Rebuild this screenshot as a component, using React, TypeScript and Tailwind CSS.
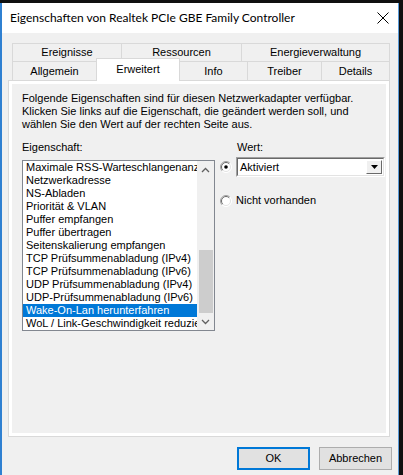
import React from "react";

const items = [
  "Maximale RSS-Warteschlangenanzahl",
  "Netzwerkadresse",
  "NS-Abladen",
  "Priorität & VLAN",
  "Puffer empfangen",
  "Puffer übertragen",
  "Seitenskalierung empfangen",
  "TCP Prüfsummenabladung (IPv4)",
  "TCP Prüfsummenabladung (IPv6)",
  "UDP Prüfsummenabladung (IPv4)",
  "UDP-Prüfsummenabladung (IPv6)",
  "Wake-On-Lan herunterfahren",
  "WoL / Link-Geschwindigkeit reduzieren",
];

function Radio({ checked }: { checked?: boolean }) {
  return (
    <svg width="12" height="12" viewBox="0 0 12 12">
      <circle cx="6" cy="6" r="5.5" fill="#ffffff" />
      <path d="M2.1 9.9 A5.5 5.5 0 0 1 9.9 2.1" stroke="#a0a0a0" fill="none" />
      <path d="M2.8 9.2 A4.5 4.5 0 0 1 9.2 2.8" stroke="#696969" fill="none" />
      <path d="M9.9 2.1 A5.5 5.5 0 0 1 2.1 9.9" stroke="#ffffff" fill="none" />
      <path d="M9.2 2.8 A4.5 4.5 0 0 1 2.8 9.2" stroke="#e3e3e3" fill="none" />
      {checked && <circle cx="6" cy="6" r="1.8" fill="#000000" />}
    </svg>
  );
}

function Chevron({ up }: { up?: boolean }) {
  return (
    <svg width="9" height="6" viewBox="0 0 9 6">
      <path
        d={up ? "M1 5 L4.5 1.5 L8 5" : "M1 1 L4.5 4.5 L8 1"}
        stroke="#606060"
        strokeWidth="1.3"
        fill="none"
      />
    </svg>
  );
}

export default function App() {
  return (
    <div
      className="w-[403px] h-[475px] overflow-hidden bg-[#101010] pt-[3px] pr-[4px] text-[11px] text-black"
      style={{ fontFamily: '"Liberation Sans", Arial, sans-serif' }}
    >
      <div className="h-full flex flex-col border-l-2 border-l-[#2f80d1] border-r border-r-[#5b9bd8] bg-[#f0f0f0]">
        {/* Title bar */}
        <div className="h-[30px] shrink-0 bg-white flex items-center justify-between pl-[8px] pr-[8px]">
          <span className="text-[12px] text-black font-[Lato,sans-serif]">
            Eigenschaften von Realtek PCIe GBE Family Controller
          </span>
          <svg width="12" height="12" viewBox="0 0 12 12" className="mr-[1px]">
            <path d="M0.5 0.5 L11.5 11.5 M11.5 0.5 L0.5 11.5" stroke="#000" strokeWidth="1" />
          </svg>
        </div>

        {/* Tabs */}
        <div className="mt-[10px] ml-[8px] w-[378px] flex flex-col">
          <div className="ml-[2px] w-[378px] flex h-[18px] border-t border-l border-[#d9d9d9]">
            <div className="w-[109px] flex items-center justify-center border-r border-[#d9d9d9]">Ereignisse</div>
            <div className="w-[120px] flex items-center justify-center border-r border-[#d9d9d9]">Ressourcen</div>
            <div className="flex-1 flex items-center justify-center border-r border-[#d9d9d9]">Energieverwaltung</div>
          </div>
          <div className="ml-[2px] w-[378px] flex items-end h-[19px] border-t border-l border-[#d9d9d9]">
            <div className="w-[84px] h-full flex items-center justify-center border-r border-[#d9d9d9]">Allgemein</div>
            <div className="relative z-10 w-[84px] h-[23px] -ml-[1px] -mb-[1px] bg-white border-t border-l border-r border-[#d9d9d9] flex items-start justify-center pt-[2px]">
              Erweitert
            </div>
            <div className="w-[68px] h-full flex items-center justify-center border-r border-[#d9d9d9]">Info</div>
            <div className="w-[74px] h-full flex items-center justify-center border-r border-[#d9d9d9]">Treiber</div>
            <div className="flex-1 h-full flex items-center justify-center border-r border-[#d9d9d9]">Details</div>
          </div>
        </div>

        {/* Panel */}
        <div className="ml-[6px] w-[382px] h-[357px] border border-[#d9d9d9] bg-white p-[3px]">
          <div className="h-full bg-[#f0f0f0] pt-[8px] pl-[10px]">
            <p className="leading-[13px]">
              Folgende Eigenschaften sind für diesen Netzwerkadapter verfügbar.
              <br />
              Klicken Sie links auf die Eigenschaft, die geändert werden soll, und
              <br />
              wählen Sie den Wert auf der rechten Seite aus.
            </p>

            <div className="flex mt-[10px]">
              {/* Left column */}
              <div className="w-[193px]">
                <div className="leading-[13px]">Eigenschaft:</div>
                <div className="mt-[6px] h-[171px] border border-[#828790] bg-white flex">
                  <div className="w-[174px] overflow-hidden">
                    {items.map((it, i) => (
                      <div
                        key={it}
                        className={
                          "h-[13px] leading-[13px] pl-[3px] whitespace-nowrap " +
                          (i === 11 ? "bg-[#0078d7] text-white" : "")
                        }
                      >
                        {it}
                      </div>
                    ))}
                  </div>
                  <div className="w-[17px] bg-[#f0f0f0] flex flex-col">
                    <div className="h-[17px] flex items-center justify-center">
                      <Chevron up />
                    </div>
                    <div className="flex-1 flex flex-col">
                      <div className="h-[72px]" />
                      <div className="ml-[2px] w-[14px] h-[63px] bg-[#cdcdcd]" />
                    </div>
                    <div className="h-[17px] flex items-center justify-center">
                      <Chevron />
                    </div>
                  </div>
                </div>
              </div>

              {/* Right column */}
              <div className="ml-[5px] flex-1">
                <div className="leading-[13px] pl-[17px]">Wert:</div>
                <div className="mt-[3px] flex items-center">
                  <div className="w-[12px] h-[12px] flex">
                    <Radio checked />
                  </div>
                  <div className="ml-[4px] w-[149px] h-[20px] border border-[#a0a0a0] border-b-white border-r-white">
                    <div className="h-full border border-[#696969] border-b-[#e3e3e3] border-r-[#e3e3e3] bg-white flex items-center justify-between">
                      <span className="pl-[2px]">Aktiviert</span>
                      <div className="mr-[1px] w-[16px] h-[14px] bg-[#f0f0f0] border border-[#ffffff] border-b-[#696969] border-r-[#696969] flex items-center justify-center">
                        <svg width="7" height="4" viewBox="0 0 7 4">
                          <path d="M0 0 L7 0 L3.5 4 Z" fill="#000" />
                        </svg>
                      </div>
                    </div>
                  </div>
                </div>
                <div className="mt-[17px] flex items-center">
                  <div className="w-[12px] h-[12px] flex">
                    <Radio />
                  </div>
                  <span className="ml-[4px] leading-[13px]">Nicht vorhanden</span>
                </div>
              </div>
            </div>
          </div>
        </div>

        {/* Buttons */}
        <div className="mt-[10px] flex justify-end gap-[9px] pr-[6px]">
          <button className="w-[73px] h-[23px] bg-[#e1e1e1] border-2 border-[#0078d7] text-[11px]">OK</button>
          <button className="w-[73px] h-[23px] bg-[#e1e1e1] border border-[#adadad] text-[11px]">Abbrechen</button>
        </div>
      </div>
    </div>
  );
}
